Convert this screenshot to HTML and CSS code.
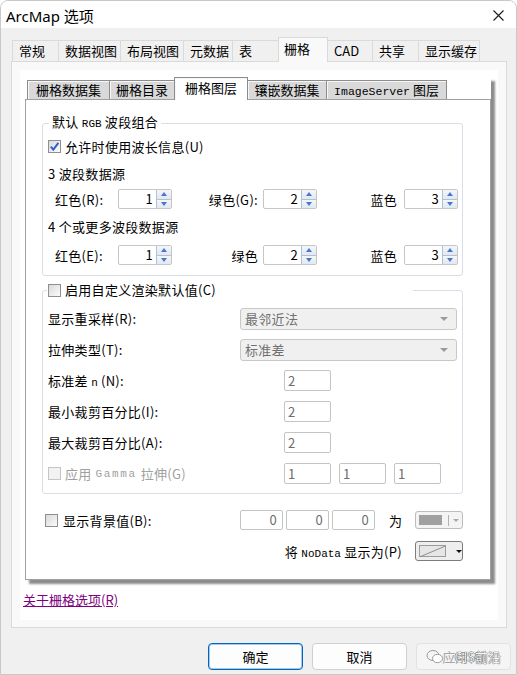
FILE: index.html
```html
<!DOCTYPE html>
<html lang="zh-CN">
<head>
  <meta charset="UTF-8" />
  <title>ArcMap 选项</title>
  <link rel="stylesheet" href="styles.css">
</head>
<body>
  <div class="window">
    <div class="titlebar">
      <span class="title">ArcMap 选项</span>
      <svg class="close" width="11" height="11" viewBox="0 0 11 11"><path d="M0.5 0.5L10.5 10.5M10.5 0.5L0.5 10.5" stroke="#1a1a1a" stroke-width="1.1"/></svg>
    </div>

    <div class="main">
      <div class="tabs">
        <div class="tab">常规</div>
        <div class="tab">数据视图</div>
        <div class="tab">布局视图</div>
        <div class="tab">元数据</div>
        <div class="tab">表</div>
        <div class="tab active">栅格</div>
        <div class="tab">CAD</div>
        <div class="tab">共享</div>
        <div class="tab">显示缓存</div>
      </div>

      <div class="tabpanel">
        <div class="page">
          <div class="sheet">
            <div class="subtabs">
              <div class="subtab">栅格数据集</div>
              <div class="subtab">栅格目录</div>
              <div class="subtab active">栅格图层</div>
              <div class="subtab">镶嵌数据集</div>
              <div class="subtab"><span class="mono">ImageServer</span> 图层</div>
            </div>

            <div class="subpanel">
              <!-- default RGB band combination -->
              <fieldset class="group rgb">
                <legend>默认 <span class="mono">RGB</span> 波段组合</legend>
                <div class="check-row">
                  <span class="cb checked"><svg width="11" height="11" viewBox="0 0 11 11"><path d="M1.8 5.6L4.3 8.6L9.4 1.8" fill="none" stroke="#2f5fd0" stroke-width="2"/></svg></span>
                  <span>允许时使用波长信息(U)</span>
                </div>
                <div class="caption">3 波段数据源</div>
                <div class="spin-row">
                  <span>红色(R):</span>
                  <div class="spin"><span class="val">1</span><span class="arrows"><i class="up"></i><i class="down"></i></span></div>
                  <span class="lbl-mid">绿色(G):</span>
                  <div class="spin"><span class="val">2</span><span class="arrows"><i class="up"></i><i class="down"></i></span></div>
                  <span class="lbl-end">蓝色</span>
                  <div class="spin"><span class="val">3</span><span class="arrows"><i class="up"></i><i class="down"></i></span></div>
                </div>
                <div class="caption tall">4 个或更多波段数据源</div>
                <div class="spin-row">
                  <span>红色(E):</span>
                  <div class="spin"><span class="val">1</span><span class="arrows"><i class="up"></i><i class="down"></i></span></div>
                  <span class="lbl-mid">绿色</span>
                  <div class="spin"><span class="val">2</span><span class="arrows"><i class="up"></i><i class="down"></i></span></div>
                  <span class="lbl-end">蓝色</span>
                  <div class="spin"><span class="val">3</span><span class="arrows"><i class="up"></i><i class="down"></i></span></div>
                </div>
              </fieldset>

              <!-- custom render defaults -->
              <fieldset class="group render">
                <legend>
                  <span class="cb"></span>
                  <span>启用自定义渲染默认值(C)</span>
                </legend>
                <div class="form-row">
                  <span>显示重采样(R):</span>
                  <div class="combo"><span>最邻近法</span><i class="caret"></i></div>
                </div>
                <div class="form-row">
                  <span>拉伸类型(T):</span>
                  <div class="combo"><span>标准差</span><i class="caret"></i></div>
                </div>
                <div class="form-row">
                  <span>标准差 <span class="mono">n</span> (N):</span>
                  <div class="field-line"><span class="field">2</span></div>
                </div>
                <div class="form-row">
                  <span>最小裁剪百分比(I):</span>
                  <div class="field-line"><span class="field">2</span></div>
                </div>
                <div class="form-row">
                  <span>最大裁剪百分比(A):</span>
                  <div class="field-line"><span class="field">2</span></div>
                </div>
                <div class="form-row disabled">
                  <span class="check-label"><span class="cb off"></span>应用 <span class="mono wide">Gamma</span> 拉伸(G)</span>
                  <div class="field-line">
                    <span class="field">1</span>
                    <span class="field">1</span>
                    <span class="field">1</span>
                  </div>
                </div>
              </fieldset>

              <!-- background / nodata -->
              <div class="bg-rows">
                <div class="bg-row">
                  <span class="bg-check"><span class="cb"></span>显示背景值(B):</span>
                  <span class="num">0</span>
                  <span class="num">0</span>
                  <span class="num">0</span>
                  <span class="as">为</span>
                  <div class="colorpick">
                    <span class="swatch"></span><span class="sep"></span><i class="caret"></i>
                  </div>
                </div>
                <div class="nodata-row">
                  <span>将 <span class="mono">NoData</span> 显示为(P)</span>
                  <div class="colorpick nodata">
                    <span class="swatch"><svg width="26" height="11" viewBox="0 0 26 11"><path d="M0 11L26 0" stroke="#8a8a8a" stroke-width="1"/></svg></span><span class="sep"></span><i class="caret"></i>
                  </div>
                </div>
              </div>
            </div>
          </div>

          <a class="help-link" href="#">关于栅格选项(R)</a>
        </div>
      </div>

      <div class="buttons">
        <button class="btn default">确定</button>
        <button class="btn">取消</button>
        <button class="btn disabled">应用(A)</button>
        <div class="watermark">
          <svg width="18" height="16" viewBox="0 0 18 16"><ellipse cx="7" cy="6.5" rx="6" ry="5" fill="none" stroke="#9a9a9a" stroke-width="1"/><ellipse cx="11.5" cy="9.5" rx="5" ry="4.2" fill="#fff" stroke="#9a9a9a" stroke-width="1"/></svg>
          <span>GIS前沿</span>
        </div>
      </div>
    </div>
  </div>
</body>
</html>
```

FILE: styles.css
```css
* {
  box-sizing: border-box;
}
body {
  margin: 0;
  background: #fff;
  font-family: "Noto Sans CJK SC", sans-serif;
  font-size: 13px;
  color: #000;
}
.mono {
  font-family: "Liberation Mono", monospace;
  font-size: 11px;
  letter-spacing: 0;
}
.mono.wide {
  letter-spacing: 1.6px;
}

.window {
  width: 517px;
  height: 675px;
  border: 1px solid #c9c9c9;
  border-radius: 8px 8px 0 0;
  background: #f0f0f0;
  overflow: hidden;
}
.titlebar {
  height: 27px;
  background: #fff;
  display: flex;
  align-items: center;
  justify-content: space-between;
  padding: 2px 12px 0 5px;
}
.title {
  font-family: "Noto Sans", "Noto Sans CJK SC", sans-serif;
  font-size: 15px;
  line-height: 20px;
}

.main {
  padding: 9px 9px 0 10px;
}

/* outer tabs */
.tabs {
  display: flex;
  align-items: flex-end;
  height: 24px;
  padding-left: 2px;
}
.tab {
  height: 21px;
  margin-left: -1px;
  padding-left: 6px;
  border: 1px solid #dadada;
  border-bottom: 0;
  background: #f0f0f0;
  line-height: 20px;
  white-space: nowrap;
}
.tab:nth-child(1) { width: 47px; }
.tab:nth-child(2) { width: 63px; }
.tab:nth-child(3) { width: 64px; }
.tab:nth-child(4) { width: 50px; }
.tab:nth-child(5) { width: 47px; }
.tab:nth-child(6) { width: 50px; }
.tab:nth-child(7) { width: 46px; }
.tab:nth-child(8) { width: 47px; }
.tab:nth-child(9) { width: 62px; }
.tab.active {
  height: 25px;
  margin-bottom: -1px;
  padding-left: 5px;
  line-height: 22px;
  background: #f9f9f9;
  position: relative;
  z-index: 1;
}

.tabpanel {
  height: 567px;
  border: 1px solid #dadada;
  background: #f9f9f9;
  padding: 8px 8px 0 8px;
}
.page {
  height: 550px;
  background: #fff;
  padding: 7px 0 0 5px;
}

/* property sheet with classic look */
.sheet {
  width: 466px;
  box-shadow: 4px 4px 2px rgba(0, 0, 0, 0.45);
}
.subtabs {
  display: flex;
  align-items: flex-end;
  height: 22px;
  padding-left: 3px;
}
.subtab {
  height: 19px;
  margin-left: -1px;
  border: 1px solid #8c8c8c;
  border-bottom: 0;
  background: #d9d9d9;
  box-shadow: inset 1px 1px 0 #f7f7f7;
  line-height: 18px;
  text-align: center;
  white-space: nowrap;
}
.subtab:nth-child(1) { width: 83px; }
.subtab:nth-child(2) { width: 66px; }
.subtab:nth-child(3) { width: 74px; }
.subtab:nth-child(4) { width: 80px; }
.subtab:nth-child(5) { width: 121px; }
.subtab .mono {
  font-size: 11.5px;
}
.subtab.active {
  height: 23px;
  margin-bottom: -1px;
  background: #fff;
  line-height: 20px;
  position: relative;
  z-index: 1;
}
.subpanel {
  height: 481px;
  border: 1px solid #a0a0a0;
  background: #fff;
  padding: 0 0 0 16px;
  letter-spacing: 0.3px;
}

/* group boxes */
.group {
  width: 421px;
  min-width: 0;
  margin: 14px 0 0 0;
  border: 1px solid #d8dde6;
  border-radius: 3px;
  padding: 0 4px 9px 5px;
}
.group legend {
  margin-left: 1px;
  padding: 0 3px;
  line-height: 16px;
}
.group.render {
  margin-top: 6px;
  padding-bottom: 4px;
}
.group.render legend {
  width: 366px;
  margin-left: -1px;
  padding: 0 0 0 1px;
  display: flex;
  align-items: center;
  gap: 4px;
}

.cb {
  width: 13px;
  height: 13px;
  flex: none;
  display: inline-flex;
  align-items: center;
  justify-content: center;
  border: 1px solid #8e8f8f;
  background: linear-gradient(135deg, #d9d9d9, #fbfbfb);
}
.cb.off {
  border-color: #c5c5c5;
  background: #f2f2f2;
}

.check-row {
  display: flex;
  align-items: center;
  gap: 4px;
  height: 28px;
}
.caption {
  height: 28px;
  line-height: 28px;
}
.caption.tall {
  height: 34px;
  line-height: 34px;
}

.spin-row {
  display: grid;
  grid-template-columns: 63px 54px 91px 54px 87px 54px;
  align-items: center;
  height: 22px;
  padding-left: 7px;
}
.lbl-mid {
  text-align: right;
  padding-right: 5px;
}
.lbl-end {
  text-align: right;
  padding-right: 7px;
}
.spin {
  display: flex;
  width: 54px;
  height: 20px;
  border: 1px solid #c6c6c6;
  border-radius: 2px;
  background: #fff;
}
.spin .val {
  flex: 1;
  text-align: right;
  padding-right: 3px;
  line-height: 18px;
}
.arrows {
  width: 15px;
  display: flex;
  flex-direction: column;
  border-left: 1px solid #b4c0d2;
}
.arrows i {
  flex: 1;
  display: flex;
  align-items: center;
  justify-content: center;
  background: linear-gradient(#f3f6fb, #e2e8f1);
}
.arrows i.up {
  border-bottom: 1px solid #b4c0d2;
}
.arrows i.up::before {
  content: "";
  border-left: 3.5px solid transparent;
  border-right: 3.5px solid transparent;
  border-bottom: 4px solid #4a78c9;
}
.arrows i.down::before {
  content: "";
  border-left: 3.5px solid transparent;
  border-right: 3.5px solid transparent;
  border-top: 4px solid #4a78c9;
}

/* render defaults rows */
.form-row {
  display: grid;
  grid-template-columns: 192px auto;
  align-items: center;
  height: 31px;
}
.group.render legend + .form-row {
  margin-top: 5px;
}
.combo {
  width: 217px;
  height: 22px;
  display: flex;
  align-items: center;
  justify-content: space-between;
  padding: 0 8px 0 4px;
  border: 1px solid #c8c8c8;
  border-radius: 3px;
  background: #f0f0f0;
  color: #707070;
}
.caret {
  width: 0;
  height: 0;
  border-left: 4px solid transparent;
  border-right: 4px solid transparent;
  border-top: 4px solid #9a9a9a;
}
.field-line {
  display: flex;
  gap: 8px;
  padding-left: 44px;
}
.field {
  width: 47px;
  height: 21px;
  padding-left: 3px;
  border: 1px solid #c4c4c4;
  border-radius: 2px;
  background: #fff;
  color: #6d6d6d;
  line-height: 19px;
}
.disabled {
  color: #a0a0a0;
}
.check-label {
  display: flex;
  align-items: center;
  gap: 4px;
}

/* background value / nodata */
.bg-rows {
  margin: 16px 0 0 3px;
}
.bg-row {
  display: flex;
  align-items: center;
  gap: 3px;
  height: 20px;
}
.bg-check {
  width: 192px;
  display: flex;
  align-items: center;
  gap: 5px;
}
.num {
  width: 43px;
  height: 20px;
  padding-right: 5px;
  border: 1px solid #c4c4c4;
  border-radius: 2px;
  text-align: right;
  color: #6d6d6d;
  line-height: 18px;
}
.as {
  margin-left: 11px;
}
.colorpick {
  width: 48px;
  height: 18px;
  margin-left: 10px;
  display: flex;
  align-items: center;
  padding: 0 3px;
  border: 1px solid #bdbdbd;
  border-radius: 3px;
  background: #f4f4f4;
}
.colorpick .swatch {
  width: 27px;
  height: 10px;
  background: #a0a0a0;
}
.colorpick .sep {
  width: 1px;
  height: 11px;
  margin: 0 4px 0 6px;
  background: #b0b0b0;
}
.colorpick .caret {
  border-left-width: 3px;
  border-right-width: 3px;
  border-top-width: 3px;
  border-top-color: #a8a8a8;
}
.nodata-row {
  width: 418px;
  margin-top: 11px;
  height: 20px;
  display: flex;
  align-items: center;
  justify-content: flex-end;
}
.colorpick.nodata {
  height: 20px;
  margin-left: 13px;
  border-color: #7c7c7c;
  background: #eeeeee;
}
.colorpick.nodata .swatch {
  height: 12px;
  border: 1px solid #9c9c9c;
  background: #e6e6e6;
  display: flex;
}
.colorpick.nodata .sep {
  background: #8a8a8a;
}
.colorpick.nodata .caret {
  border-top-color: #111;
}

.help-link {
  display: inline-block;
  margin: 12px 0 0 -2px;
  color: #800080;
  line-height: 16px;
  text-decoration: underline;
}

/* dialog buttons */
.buttons {
  position: relative;
  display: flex;
  justify-content: flex-end;
  gap: 9px;
  margin: 15px -4px 0 0;
}
.btn {
  width: 95px;
  height: 27px;
  border: 1px solid #d0d0d0;
  border-radius: 4px;
  background: #fdfdfd;
  font-family: "Noto Sans CJK SC", sans-serif;
  font-size: 13px;
  color: #000;
  padding: 0;
}
.btn.default {
  border-color: #0067c0;
  box-shadow: inset 0 0 0 1px rgba(0, 103, 192, 0.35);
}
.btn.disabled {
  background: #f5f5f5;
  border-color: #e2e2e2;
  color: #a6a6a6;
}
.watermark {
  position: absolute;
  right: 10px;
  top: 4px;
  display: flex;
  align-items: center;
  gap: 10px;
  color: #f4f4f4;
  font-size: 13px;
  text-shadow: 0 0 1px #3a3a3a, 0 0 1px #3a3a3a;
  pointer-events: none;
}
```
